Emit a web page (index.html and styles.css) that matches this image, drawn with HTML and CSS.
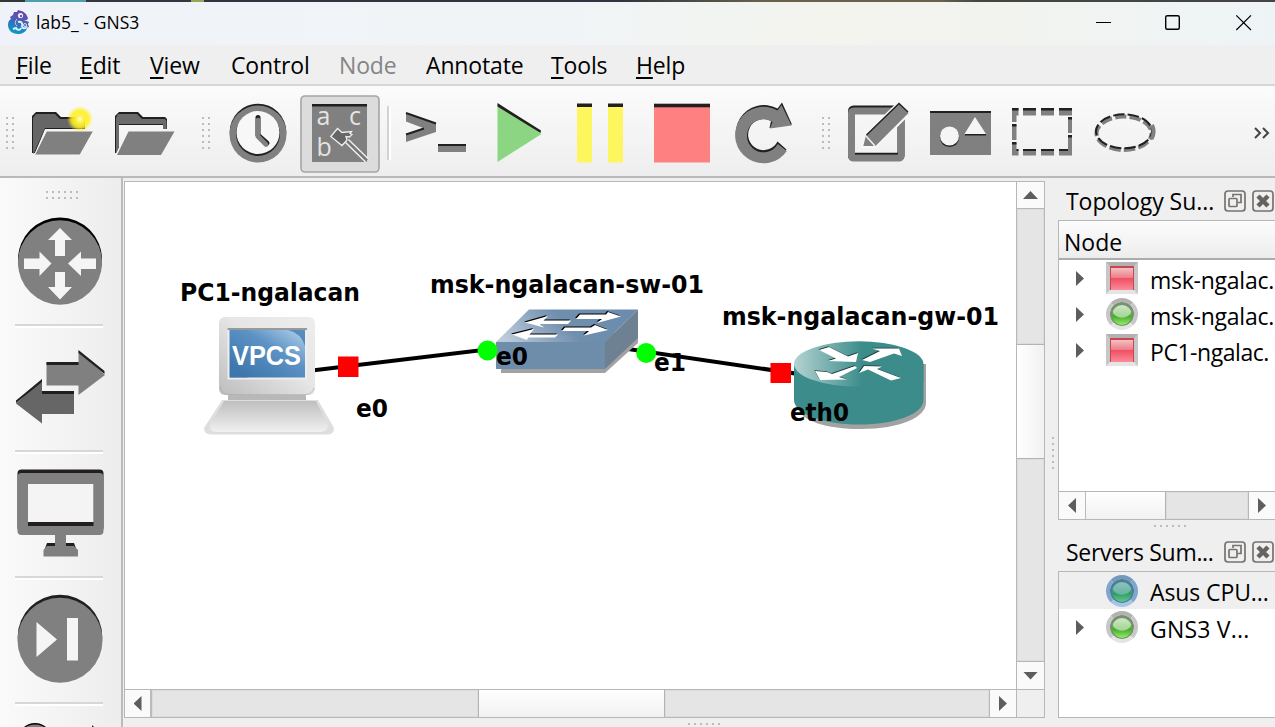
FILE: index.html
```html
<!DOCTYPE html>
<html lang="en">
<head>
<meta charset="utf-8">
<title>lab5_ - GNS3</title>
<link rel="stylesheet" href="styles.css">
</head>
<body>
<div class="desktop"></div>
<div class="window">
<header class="titlebar">
  <svg class="logo" width="24" height="26" viewBox="7 9 24 26">
    <defs><linearGradient id="lg" x1="0.6" y1="0" x2="0.3" y2="1"><stop offset="0" stop-color="#6d42ad"/><stop offset="0.45" stop-color="#4a5fb5"/><stop offset="0.75" stop-color="#1689c4"/><stop offset="1" stop-color="#0a9fc0"/></linearGradient></defs>
    <path fill="url(#lg)" d="M10 17L13 15L14 12L17 12L18 10L23 11.500L26 14L28 18L27 20L24 20L29 22L28 24L29 27L27 28C26 32 22 34 18 34C12 34 8 30 8 25C8 22 9 20 11 19Z"/>
    <circle cx="20.500" cy="15.500" r="2.600" fill="#e7edf8"/><circle cx="21" cy="16" r="1.100" fill="#433978"/>
    <path d="M17 19Q13.500 23 17 26" fill="none" stroke="#bccbe9" stroke-width="1"/>
    <path d="M18 22C21 21 23 23 22 26C22 29 26 29 27 26.500M21 28C20 31 17 30 16 28L13 29" fill="none" stroke="#e1edf7" stroke-width="1.900"/>
    <circle cx="25" cy="25" r="1.500" fill="none" stroke="#cfe5f2"/>
  </svg>
  <span class="caption">lab5_ - GNS3</span>
  <svg class="winctl" width="175" height="43" viewBox="1090 2 175 43" fill="none" stroke="#000" stroke-width="1.200">
    <path d="M1096 22.500H1111M1236.300 15.300L1251 30M1251 15.300L1236.300 30"/><rect x="1165.700" y="15.700" width="13.600" height="13.600" rx="1.500" stroke-width="1.400"/>
  </svg>
</header>
<nav class="menubar">
  <span class="m-file"><u>F</u>ile</span><span class="m-edit"><u>E</u>dit</span><span class="m-view"><u>V</u>iew</span><span class="m-control">Control</span><span class="m-node">Node</span><span class="m-annotate">Annotate</span><span class="m-tools"><u>T</u>ools</span><span class="m-help"><u>H</u>elp</span>
</nav>
<div class="toolbar">
  <div class="grip first"><i class="dots v"></i></div>
  <svg class="slot" viewBox="21 86 82 90">
    <defs><radialGradient id="glow"><stop offset="0" stop-color="#fffde0"/><stop offset="0.25" stop-color="#fff34a"/><stop offset="0.65" stop-color="#fff01c" stop-opacity=".85"/><stop offset="1" stop-color="#fff01c" stop-opacity="0"/></radialGradient></defs>
    <path fill="#231f20" d="M32 153V116L36 112H56L61 117H83L85 119V129H45L35 153Z"/>
    <path fill="#666" d="M33 154V118L36 114H55L60 119H82L84.500 121V128H45L34 153Z"/>
    <path fill="#808080" stroke="#f5f5f5" stroke-width="1" d="M46.500 131H93.500L80 155H34.500Z"/>
    <circle cx="80" cy="119" r="13" fill="url(#glow)"/>
  </svg>
  <svg class="slot" viewBox="103 86 82 90">
    <path fill="#231f20" d="M115 153V116L119 112H138L143 117H165L167 119V129H163V125H119V147L116 153Z"/>
    <path fill="#6b6b6b" d="M116 153V118L118 114H137L142 119H165L166.500 121V129H163V124H119V147Z"/>
    <path fill="#808080" d="M128.500 131.500H174.500L161 155H117Z"/>
  </svg>
  <div class="grip"><i class="dots v"></i></div>
  <svg class="slot" viewBox="217 86 82 90">
    <circle cx="258" cy="132" r="28.300" fill="#231f20"/><circle cx="258" cy="134" r="28.500" fill="#808080"/>
    <circle cx="258" cy="134" r="22" fill="#231f20"/><circle cx="258" cy="132.500" r="21.500" fill="#f7f7f7"/>
    <path d="M258 117.500V135L267 143" fill="none" stroke="#231f20" stroke-width="5" stroke-linecap="round"/>
    <path d="M258 120V136.500L266 144.500" fill="none" stroke="#808080" stroke-width="4.600" stroke-linecap="round"/>
  </svg>
  <svg class="slot" viewBox="299 86 82 90">
    <rect x="301" y="96" width="78" height="76" rx="4" fill="#dcdcdc" stroke="#a5a5a5" stroke-width="1.600"/>
    <rect x="312" y="104" width="55" height="58" fill="#808080"/><rect x="312" y="104" width="55" height="2.500" fill="#231f20"/>
    <g class="glyphs"><text x="316.500" y="124.500">a</text><text x="349" y="124.500">c</text><text x="316.500" y="156">b</text></g>
    <path d="M367 160.500L347 141" stroke="#efefef" stroke-width="5.500"/><path d="M367 160.500L346 140" stroke="#777" stroke-width="2.600"/>
    <path d="M330.800 136.500L337.500 128.500L342 132.500L351.500 131.500L350 133.500L352 134.500L349.500 137L346 136.500L347 140L342 145.500Z" fill="#666" stroke="#efefef" stroke-width="1.300"/>
  </svg>
  <div class="tsep"></div>
  <svg class="slot" viewBox="395 86 82 90">
    <path fill="#808080" d="M406 113L436 123.500V132L406 142V134L423 128L406 121.500Z"/>
    <path d="M406 113L436 123.500M406 134.500L424 128.500" stroke="#231f20" stroke-width="2" fill="none"/>
    <rect x="438" y="144" width="28" height="8" fill="#808080"/><rect x="438" y="144" width="28" height="2" fill="#231f20"/>
  </svg>
  <svg class="slot" viewBox="477 86 82 90"><path fill="#8bd583" d="M497.500 104L541.500 134L497.500 162Z"/><path fill="#231f20" d="M497.500 103L541 130.500L540.500 133L497.500 106.500Z"/></svg>
  <svg class="slot" viewBox="559 86 82 90"><path fill="#fdf65f" d="M577 104H592V162.500H577ZM608 104H623V162.500H608Z"/><path fill="#231f20" d="M577 103.500H592V107H577ZM608 103.500H623V107H608Z"/></svg>
  <svg class="slot" viewBox="641 86 82 90"><rect x="654" y="104" width="56" height="58.500" fill="#ff8080"/><rect x="654" y="103.700" width="56" height="3.600" fill="#231f20"/></svg>
  <svg class="slot" viewBox="723 86 82 90">
    <path d="M786.500 149.500A28 28 0 1 1 777.500 108.500L782 102.500L792 124.500L769.500 128L771 121A15.500 15.500 0 1 0 777.500 141.500Z" fill="#231f20"/>
    <path d="M786.800 151A28.300 28.300 0 1 1 777.500 110.500L781.500 105L791.500 125.500L770 128.500L772.500 122A16.500 16.500 0 1 0 777.800 144Z" fill="#808080"/>
  </svg>
  <div class="grip"><i class="dots v"></i></div>
  <svg class="slot" viewBox="837 86 82 90">
    <rect x="851.500" y="109" width="49.500" height="48.500" rx="2" fill="none" stroke="#231f20" stroke-width="7"/>
    <rect x="851.500" y="111" width="49.500" height="47" rx="2" fill="none" stroke="#808080" stroke-width="7"/>
    <path d="M855 153.500H898" stroke="#231f20" stroke-width="1.500"/>
    <path d="M865 135L899 102L910 113L876 147L862 147Z" fill="#808080" stroke="#f7f7f7" stroke-width="2"/>
    <path d="M866.500 135L899 103.500L908 112" fill="none" stroke="#231f20" stroke-width="1.400"/><path d="M866 136L875 146" stroke="#f7f7f7" stroke-width="1.400"/>
  </svg>
  <svg class="slot" viewBox="919 86 82 90">
    <rect x="930" y="111" width="61" height="44" fill="#808080"/><rect x="930" y="111" width="61" height="2" fill="#231f20"/>
    <circle cx="949.500" cy="137.300" r="9.700" fill="#231f20"/><circle cx="949.500" cy="136" r="9.500" fill="#f5f5f5"/>
    <path d="M965 134H986V135.500H965Z" fill="#231f20"/><path d="M975 117L986 134H964.500Z" fill="#f5f5f5"/>
  </svg>
  <svg class="slot" viewBox="1001 86 82 90">
    <path fill="#808080" d="M1012 108H1018.500V115.500H1016.500V122H1012ZM1023 108H1036V115.500H1023ZM1041 108H1054V115.500H1041ZM1059 108H1072V115.500H1059ZM1068 117H1072V133H1068ZM1068 136H1072V155.500H1059V149H1068ZM1012 125H1016.500V140H1012ZM1012 143H1016.500V149H1018.500V155.500H1012ZM1023 149H1036V155.500H1023ZM1041 149H1054V155.500H1041Z"/>
    <path fill="#231f20" d="M1012 108H1018.500V110.500H1012ZM1023 108H1036V110.500H1023ZM1041 108H1054V110.500H1041ZM1059 108H1072V110.500H1059ZM1068 117H1072V119.500H1068ZM1068 135H1072V137.500H1068ZM1012 124H1016.500V126.500H1012ZM1012 142H1016.500V144.500H1012ZM1016.500 149H1018.500V151H1016.500ZM1023 149H1036V151H1023ZM1041 149H1054V151H1041ZM1059 149H1068V151H1059Z"/>
  </svg>
  <svg class="slot" viewBox="1083 86 82 90" fill="none" stroke-dasharray="11.300 3.200">
    <ellipse cx="1124" cy="133.300" rx="27.500" ry="16.700" stroke="#808080" stroke-width="4" stroke-dashoffset="5"/>
    <ellipse cx="1124" cy="131.300" rx="28" ry="17" stroke="#231f20" stroke-width="2" stroke-dashoffset="5"/>
    <path d="M1152 125Q1155.500 132 1151.500 139" stroke="#808080" stroke-width="4" stroke-dasharray="none"/>
  </svg>
  <svg class="more" width="18" height="14" viewBox="0 0 18 14" fill="none" stroke="#444" stroke-width="2"><path d="M2 2L7 7L2 12M10 2L15 7L10 12"/></svg>
</div>
<div class="workspace">
  <aside class="devices">
    <div class="dgrip"><i class="dots h two"></i></div>
    <svg class="dslot" viewBox="0 203 121 120">
      <ellipse cx="60" cy="259" rx="42" ry="42" fill="#000"/><ellipse cx="60" cy="262" rx="42" ry="42.200" fill="#808080"/>
      <path fill="#f5f5f5" d="M60 227.500L72 239.500H65V255.500H55V239.500H48ZM60 299L48 286.500H55V271.500H65V286.500H72ZM51.500 263L39.500 275.500V268.500H24V258H39.500V251ZM68 263L81 251V258H96V268.500H81V275.500Z"/>
    </svg><hr>
    <svg class="dslot" viewBox="0 328 121 122">
      <path fill="#808080" d="M46.500 362H78.500V351L105 375L78.500 395V385.500H46.500Z"/><path fill="#231f20" d="M46.500 362H78.500V365H46.500ZM78.500 350L104.500 371V374L78.500 353Z"/>
      <path fill="#666" d="M74 391H42V380L16 403.500L42 423.500V414H74Z"/><path fill="#231f20" d="M74 391H42V394H74ZM42 379L16 400.500V403L42 382Z"/>
    </svg><hr>
    <svg class="dslot" viewBox="0 454 121 122">
      <rect x="17.500" y="469.500" width="86" height="62" rx="4" fill="#231f20"/><rect x="17.500" y="473" width="86" height="62" rx="4" fill="#808080"/>
      <rect x="28" y="484" width="65.500" height="42" fill="#231f20"/><rect x="28" y="484" width="65.500" height="38" fill="#f4f4f4"/>
      <path fill="#231f20" d="M55 543H47L44 551H77L74 543H66Z"/><path fill="#808080" d="M55 534H66V546H74L78 550V556.500H43.500V550L47 546H55Z"/>
    </svg><hr>
    <svg class="dslot" viewBox="0 580 121 122">
      <circle cx="60" cy="637" r="42.300" fill="#231f20"/><circle cx="60" cy="640.300" r="42.500" fill="#808080"/><path fill="#f5f5f5" d="M36.500 622L57 639.500L36.500 657ZM67 618H78V660.500H67Z"/>
    </svg><hr>
    <svg class="dslot tail" viewBox="0 705 121 22">
      <circle cx="35" cy="739" r="17" fill="#000"/><circle cx="35" cy="740.500" r="17" fill="#808080"/><path d="M92 724L96 728H92Z" fill="#222"/>
    </svg>
  </aside>
  <main class="central">
    <div class="view">
      <svg class="scene" viewBox="125 182 891 507">
        <defs>
          <linearGradient id="case" x1="0" y1="1" x2="1" y2="0"><stop offset="0" stop-color="#bdbdbd"/><stop offset=".55" stop-color="#e6e6e6"/><stop offset="1" stop-color="#ededed"/></linearGradient>
          <linearGradient id="scr" x1="0" y1="1" x2="1" y2="0"><stop offset="0" stop-color="#376fa6"/><stop offset=".6" stop-color="#5c92c4"/><stop offset="1" stop-color="#b5d2ec"/></linearGradient>
          <linearGradient id="kb" x1="0" y1="0" x2="0" y2="1"><stop offset="0" stop-color="#bfbfbf"/><stop offset="1" stop-color="#f0f0f0"/></linearGradient>
          <linearGradient id="sw" x1="0" y1=".6" x2="1" y2=".4"><stop offset="0" stop-color="#bccbdb"/><stop offset=".5" stop-color="#708fae"/><stop offset="1" stop-color="#6b8cad"/></linearGradient>
          <linearGradient id="rt"><stop offset="0" stop-color="#b3d3d2"/><stop offset=".53" stop-color="#3b8c8a"/></linearGradient>
          <path id="swa" d="M525 322.500L548 316L543.500 320.500H571L568 324H540L544 327.500ZM512 334.500L534 329L529.500 334.500H558L555 337.500H528L527 340ZM580 314.500H606L608 312L621 316.500L597 323L602 319H576ZM565 327.500H591L595 325L608 330L584 335.500L589 331H562Z"/>
          <path id="ra" d="M819 350L829 347L848 356.500L858 353L856 362L828 361L836 358.500ZM862 360L880 351L872 348.500H899L902 356L894 353.500L870 362ZM855 366L832 374L827 372L815 371L820 380L847 379.500L839 377L857 368ZM859 373L864 366L882 366.500L877 369L901 378L891 380.500L868 369.500Z"/>
        </defs>
        <path d="M266 376L567 340L860 383" fill="none" stroke="#000" stroke-width="4"/>
        <path d="M228 393H306V401H228Z" fill="#b8b8b8"/>
        <rect x="219" y="317" width="96" height="78" rx="6" fill="url(#case)"/>
        <path d="M220 386Q221 394 228 394.500H306Q312 394 314 388" fill="none" stroke="#aaa" opacity=".6"/>
        <path d="M222 400H318L334 428Q334 434 328 434.500H211Q204 434 204 428Z" fill="#dedede"/>
        <path d="M224 401H316L328 425Q328 432 320 432H216Q209 431 210 425Z" fill="url(#kb)"/>
        <rect x="227.500" y="328" width="79.500" height="51.500" fill="#eee"/><rect x="227.500" y="328" width="79.500" height="2" fill="#999"/>
        <rect x="229.500" y="330" width="75.500" height="47.500" fill="url(#scr)"/>
        <path d="M288 330H305V346Q301 333 288 330ZM230 362Q235 374 248 377.500H230Z" fill="#3f77ad" opacity=".75"/>
        <text class="vpcs" x="232" y="365" textLength="69" lengthAdjust="spacingAndGlyphs">VPCS</text>
        <path d="M501 370L528 312L638 338V343L605 373H501Z" fill="#a2a2a2"/>
        <path d="M496 342L529 309.500H638L605 342Z" fill="url(#sw)"/><path d="M605 342L638 309.500V338L605 369Z" fill="#6e8193"/><path d="M496 342H605V369H496Z" fill="#6e8dab"/>
        <use href="#swa" x="-1" y="-1" fill="#000"/><use href="#swa" fill="#fff"/>
        <path d="M797 367V406C800 421 826 429 861 429C900 429 926 417 926 403V364Z" fill="#a2a2a2"/>
        <path d="M794 364V400C794 414 824 424.500 859 424.500C895 424.500 923.500 414 923.500 400V364Z" fill="#3b8c8a"/>
        <ellipse cx="858.700" cy="364" rx="64.700" ry="22.700" fill="url(#rt)"/>
        <path d="M860 386.700C895 386.700 923.500 377 923.500 364V382H860Z" fill="#3b8c8a"/>
        <use href="#ra" x="-.7" y="-.8" fill="#173939"/><use href="#ra" fill="#fff"/>
        <path d="M338 356.500H358.500V377H338ZM770.500 363H791V383H770.500Z" fill="#f00"/>
        <circle cx="487.500" cy="350.500" r="10" fill="#0f0"/><circle cx="646.200" cy="353" r="10" fill="#0f0"/>
        <g class="labels">
          <text x="180" y="300.500" textLength="180" lengthAdjust="spacingAndGlyphs">PC1-ngalacan</text>
          <text x="430" y="292.500" textLength="274" lengthAdjust="spacingAndGlyphs">msk-ngalacan-sw-01</text>
          <text x="722" y="324.500" textLength="277" lengthAdjust="spacingAndGlyphs">msk-ngalacan-gw-01</text>
          <text x="356" y="416.500" textLength="32" lengthAdjust="spacingAndGlyphs">e0</text>
          <text x="496" y="364.500" textLength="32" lengthAdjust="spacingAndGlyphs">e0</text>
          <text x="654" y="370.500" textLength="32" lengthAdjust="spacingAndGlyphs">e1</text>
          <text x="790" y="420.500" textLength="59" lengthAdjust="spacingAndGlyphs">eth0</text>
        </g>
      </svg>
      <div class="vbar"><b class="btn btn-up"><i class="tri up"></i></b><span class="track vt1"></span><span class="thumb vthumb"></span><span class="track vt2"></span><b class="btn btn-down"><i class="tri down"></i></b></div>
      <div class="hbar"><b class="btn btn-left"><i class="tri left"></i></b><span class="track ht1"></span><span class="thumb hthumb"></span><span class="track ht2"></span><b class="btn btn-right"><i class="tri right"></i></b></div>
      <div class="corner"></div>
    </div>
    <i class="dots h bottomdots"></i>
  </main>
  <div class="split"><i class="dots splitdots"></i></div>
  <aside class="dock">
    <div class="dtitle"><span class="t1">Topology Su...</span>
      <svg width="50" height="22" viewBox="1224 189 50 22" fill="none" stroke="#77736e" stroke-width="1.700"><defs><g id="db"><rect x="1225" y="190" width="20" height="20" rx="3"/><rect x="1229" y="197.500" width="8" height="8" rx="1"/><path d="M1233 196V193.500H1241V201.500H1238"/><rect x="1253" y="190" width="20" height="20" rx="3"/><path d="M1258 195L1268 205M1268 195L1258 205" stroke="#67635e" stroke-width="4.500"/></g></defs><use href="#db"/></svg>
    </div>
    <div class="tree topo">
      <div class="thead">Node</div>
      <div class="row"><i class="tri right"></i><i class="led red"></i><span>msk-ngalac.</span></div>
      <div class="row"><i class="tri right"></i><i class="led green"></i><span>msk-ngalac.</span></div>
      <div class="row"><i class="tri right"></i><i class="led red"></i><span class="pc">PC1-ngalac.</span></div>
      <div class="dbar"><b class="btn btn-left"><i class="tri left"></i></b><span class="thumb dthumb"></span><span class="track dtrack"></span><b class="btn btn-right"><i class="tri right"></i></b></div>
    </div>
    <div class="docksplit"><i class="dots h"></i></div>
    <div class="dtitle second"><span class="t2">Servers Sum...</span>
      <svg width="50" height="22" viewBox="1224 189 50 22" fill="none" stroke="#77736e" stroke-width="1.700"><use href="#db"/></svg>
    </div>
    <div class="tree servers">
      <div class="row selected"><i class="tri none"></i><i class="led blue"></i><span class="asus">Asus CPU...</span></div>
      <div class="row"><i class="tri right"></i><i class="led green"></i><span class="vm">GNS3 V...</span></div>
    </div>
  </aside>
</div>
</div>
</body>
</html>
```
FILE: styles.css
```css
* { box-sizing: border-box; }
body { margin: 0; width: 1275px; height: 727px; overflow: hidden; background: #efefef; color: #000; font: 23px "Open Sans", "Noto Sans", sans-serif; }
svg { display: block; flex: none; }
.desktop { height: 2px; background: linear-gradient(90deg, #34343d 0 25px, #4f9eaa 25px 86px, #333640 86px 191px, #96a65b 191px 204px, #30343e 204px 620px, #66604c 760px 940px, #444 980px); }
.window { height: 725px; display: flex; flex-direction: column; }
.titlebar { height: 43px; display: flex; align-items: center; padding: 0 10px 0 7px; background: linear-gradient(90deg, #eff3f9, #f1f4f6 45%, #f3f4ee 65%, #f2f3ef 78%, #eef4f6); border-radius: 7px 7px 0 0; }
.logo { margin-bottom: 3px; }
.caption { font-size: 17.5px; margin: 0 0 3px 5px; letter-spacing: .05px; white-space: nowrap; }
.winctl { margin-left: auto; }
.menubar { height: 41px; flex: none; border-bottom: 2px solid #d7d7d7; background: #efefef; display: flex; align-items: center; padding: 1px 0 0 16px; white-space: nowrap; letter-spacing: -.15px; }
.menubar span { flex: none; line-height: 36px; }
.menubar u { text-decoration-thickness: 2px; text-underline-offset: 3px; text-decoration-skip-ink: none; }
.m-file { width: 64px; } .m-edit { width: 70px; } .m-view { width: 81px; } .m-control { width: 108px; }
.m-node { width: 87px; color: #858585; } .m-annotate { width: 125px; } .m-tools { width: 85px; }
.toolbar { height: 92px; flex: none; display: flex; align-items: flex-start; background: linear-gradient(#fbfbfb, #eee); border-bottom: 2px solid #b9b9b9; }
.slot { width: 82px; height: 90px; }
.grip { width: 32px; flex: none; padding: 31px 0 0 17px; }
.grip.first { width: 21px; padding-left: 6px; }
.dots { display: block; background: radial-gradient(circle at 1px 1px, #bcbcbc 1.1px, transparent 1.2px) 0 0 / 6px 6px; }
.dots.v { width: 9px; height: 33px; }
.dots.h { width: 33px; height: 3px; }
.dots.two { height: 9px; }
.tsep { width: 4px; height: 54px; margin: 20px 4px 0 6px; flex: none; background: #fff; border-left: 2px solid #d2d2d2; }
.more { margin: 40px 4px 0 auto; }
.glyphs { font: 25px "Open Sans", sans-serif; fill: #e4e4e4; }
.workspace { flex: 1; min-height: 0; display: flex; }
.devices { width: 123px; flex: none; border-right: 2px solid #bbb; background: linear-gradient(90deg, #fafafa, #ededed); overflow: hidden; }
.dgrip { height: 25px; padding: 13px 0 0 46px; }
.dslot { width: 121px; height: 122px; }
.dgrip + .dslot { height: 121px; }
.dslot.tail { height: 22px; }
.devices hr { height: 4px; width: 88px; border: 0; border-top: 2px solid #d7d7d7; background: #fff; margin: 0 0 0 15px; }
.central { width: 922px; flex: none; padding: 3px 0 0 1px; }
.view { width: 921px; height: 537px; display: grid; grid-template: 507px 28px / 891px 28px; border: 1px solid #b7b7b7; background: #fff; }
.scene { width: 891px; height: 507px; }
.labels { font: bold 24.5px "DejaVu Sans", sans-serif; }
.vpcs { font: bold 27px "Liberation Sans", sans-serif; fill: #fff; }
.vbar { display: flex; flex-direction: column; border-left: 1px solid #b7b7b7; }
.hbar, .dbar { display: flex; border-top: 1px solid #b7b7b7; }
.btn { display: flex; align-items: center; justify-content: center; background: #fafafa; flex: none; }
.track { background: #e5e5e5; border: 1px solid #dcdcdc; flex: none; }
.thumb { flex: none; background: linear-gradient(90deg, #fff, #f1f1f1); border: 1px solid #b3b3b3; border-width: 1px 0; }
.btn-up { height: 27px; border-bottom: 1px solid #b7b7b7; }
.vt1 { height: 135px; }
.vthumb { height: 115px; }
.vt2 { height: 202px; }
.btn-down { height: 28px; border-top: 1px solid #b7b7b7; }
.hthumb, .dthumb { background: linear-gradient(#fff, #f1f1f1); border-width: 0 1px; }
.btn-left, .btn-right { width: 27px; }
.btn-left { border-right: 2px solid #bbb; }
.btn-right { border-left: 1px solid #b7b7b7; }
.ht1 { width: 326px; }
.hthumb { width: 187px; }
.ht2 { width: 324px; }
.corner { border: 1px solid #b7b7b7; border-right: 0; border-bottom: 0; background: #efefef; }
.tri { display: block; width: 8px; height: 15px; background: #5d5d5d; flex: none; }
.tri.right { clip-path: polygon(0 0, 100% 50%, 0 100%); }
.tri.left { clip-path: polygon(100% 0, 0 50%, 100% 100%); }
.tri.up, .tri.down { width: 15px; height: 8px; }
.tri.up { clip-path: polygon(50% 0, 100% 100%, 0 100%); }
.tri.down { clip-path: polygon(0 0, 100% 0, 50% 100%); }
.tri.none { visibility: hidden; }
.bottomdots { margin: 5px 0 0 564px; }
.split { width: 13px; flex: none; padding: 259px 0 0 7px; }
.splitdots { width: 3px; height: 33px; }
.dock { width: 217px; flex: none; padding-top: 3px; }
.dtitle { height: 39px; display: flex; align-items: center; justify-content: space-between; padding: 0 1px 0 8px; white-space: nowrap; letter-spacing: -.05px; }
.tree { border: 1px solid #b7b7b7; border-right: 0; background: #fff; overflow: hidden; }
.topo { height: 300px; display: flex; flex-direction: column; }
.thead { height: 39px; flex: none; border-bottom: 2px solid #acacac; background: linear-gradient(#fcfcfc, #ededed); padding: 3px 0 0 5px; line-height: 36px; }
.row { height: 36px; flex: none; display: flex; align-items: center; padding: 3px 0 0 17px; white-space: nowrap; letter-spacing: -.25px; }
.row .led { margin: 0 12px 0 22px; }
.row .tri { margin-bottom: 2px; }
.row .pc { letter-spacing: -.45px; }
.row .vm { letter-spacing: .2px; }
.row .asus { letter-spacing: -.1px; }
.led { width: 32px; height: 32px; flex: none; border: 4px solid #c8c8c8; border-color: #b2b2b2 #c7c7c7 #e4e4e4; margin-bottom: 3px; }
.row .led { margin-bottom: 3px; }
.led.red { background: linear-gradient(#f4cfd0, #ed7f88 48%, #ef4c62 50%, #fb8c9a) padding-box; box-shadow: inset 0 1px 0 1px #c94550; }
.led.green { border-radius: 50%; background: radial-gradient(ellipse 10px 8px at 12px 8px, #ffffff80 90%, #fff0) padding-box, linear-gradient(#b0d9a2, #49ad2d 60%, #9bf773) padding-box; box-shadow: inset 0 1px 0 2px #78906f; }
.led.blue { border-radius: 50%; border-color: #7599bc #80a6d0 #a4c4e9; background: radial-gradient(ellipse 10px 8px at 12px 8px, #a5d0d580 90%, #fff0) padding-box, linear-gradient(#80bbc0, #2f9b68 60%, #68cc94) padding-box; box-shadow: inset 0 1px 0 2px #4b7f94; }
.dbar { margin-top: auto; height: 28px; flex: none; }
.dbar .btn-left { border-right-width: 1px; }
.dthumb { width: 80px; border-left: 0; }
.dtrack { width: 82px; }
.docksplit { height: 13px; padding: 5px 0 0 96px; }
.dtitle.second { height: 38px; }
.dtitle .t2 { letter-spacing: -.3px; }
.servers { height: 147px; }
.servers .row { padding-top: 3px; }
.servers .selected { height: 37px; background: #efefef; }
```
